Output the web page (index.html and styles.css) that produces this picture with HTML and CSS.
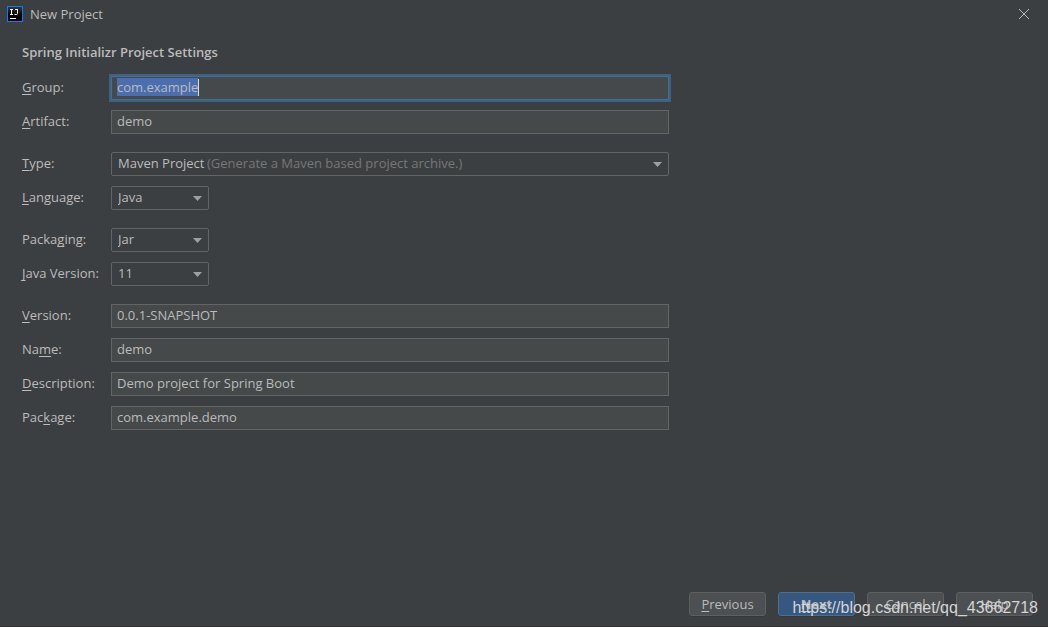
FILE: index.html
```html
<!DOCTYPE html>
<html lang="en">
<head>
<meta charset="utf-8">
<title>New Project</title>
<link rel="stylesheet" href="styles.css">
</head>
<body>
<div class="dialog">
  <header class="titlebar">
    <svg class="logo" width="16" height="16" viewBox="0 0 16 16" aria-hidden="true">
      <defs><linearGradient id="logo-fill" x1="0" y1="0" x2="0" y2="1"><stop offset="0" stop-color="#3a3a3a"/><stop offset="0.6" stop-color="#000"/></linearGradient></defs>
      <rect x="0.5" y="0.5" width="15" height="15" fill="url(#logo-fill)" stroke="#087cfa"/>
      <path d="M3 3.5h3M4.5 3v5M3 8.5h3M8 3.5h3M10.5 3v4.5q0 1-1 1H7.5M3 12.5h6" fill="none" stroke="#fff"/>
    </svg>
    <h1 class="title">New Project</h1>
    <button class="close" type="button" aria-label="Close">
      <svg width="10" height="10" viewBox="0 0 10 10" aria-hidden="true"><path d="M0 0L10 10M10 0L0 10" fill="none" stroke="currentColor"/></svg>
    </button>
  </header>
  <form class="settings" id="settings">
    <h2 class="heading">Spring Initializr Project Settings</h2>
    <div class="group">
      <label class="label" for="group"><u>G</u>roup:</label>
      <div class="field"><input class="text" id="group" type="text" value="com.example" autofocus><span class="caret"></span></div>
      <label class="label" for="artifact"><u>A</u>rtifact:</label>
      <input class="text" id="artifact" type="text" value="demo">
    </div>
    <div class="group">
      <label class="label" for="type"><u>T</u>ype:</label>
      <div class="field"><select class="select" id="type"><option>Maven Project</option></select><span class="hint">(Generate a Maven based project archive.)</span></div>
      <label class="label" for="language"><u>L</u>anguage:</label>
      <select class="select short" id="language"><option>Java</option></select>
    </div>
    <div class="group">
      <label class="label" for="packaging">Packa<u>g</u>ing:</label>
      <select class="select short" id="packaging"><option>Jar</option></select>
      <label class="label" for="java"><u>J</u>ava Version:</label>
      <select class="select short" id="java"><option>11</option></select>
    </div>
    <div class="group">
      <label class="label" for="version"><u>V</u>ersion:</label>
      <input class="text" id="version" type="text" value="0.0.1-SNAPSHOT">
      <label class="label" for="name">Na<u>m</u>e:</label>
      <input class="text" id="name" type="text" value="demo">
      <label class="label" for="description"><u>D</u>escription:</label>
      <input class="text" id="description" type="text" value="Demo project for Spring Boot">
      <label class="label" for="package">Pac<u>k</u>age:</label>
      <input class="text" id="package" type="text" value="com.example.demo">
    </div>
  </form>
  <footer class="actions">
    <button class="button" type="button"><u>P</u>revious</button>
    <button class="button primary" type="submit" form="settings"><u>N</u>ext</button>
    <button class="button" type="button">Cancel</button>
    <button class="button" type="button">Help</button>
    <span class="watermark">https://blog.csdn.net/qq_43662718</span>
  </footer>
</div>
<script src="main.js"></script>
</body>
</html>
```

FILE: styles.css
```css
* { box-sizing: border-box; }

body {
  margin: 0;
  background: #3c3f41;
  color: #bbbbbb;
  font: 13px/18px "Open Sans", "Noto Sans", sans-serif;
}

.dialog {
  display: flex;
  flex-direction: column;
  min-height: 100vh;
  border-bottom: 1px solid #303234;
}

.titlebar {
  display: flex;
  align-items: center;
  gap: 7px;
  height: 28px;
  padding: 0 19px 0 7px;
}

.logo { display: block; }

.title {
  margin: 0;
  font-size: 13px;
  font-weight: 400;
}

.close {
  display: flex;
  margin-left: auto;
  padding: 0;
  border: 0;
  background: none;
  color: #bbbbbb;
}

.settings {
  display: flex;
  flex-direction: column;
  gap: 18px;
  flex: 1;
  max-width: 691px;
  padding: 15px 22px;
}

.heading {
  margin: 0 0 -3px;
  font-size: 13px;
  line-height: 18px;
  font-weight: 600;
}

.group {
  display: grid;
  grid-template-columns: 79px 1fr;
  gap: 10px;
  align-items: center;
}

.label {
  padding-bottom: 2px;
  white-space: nowrap;
}

u {
  text-decoration: underline;
  text-decoration-thickness: 1px;
  text-underline-offset: 2px;
  text-decoration-skip-ink: none;
}

.field {
  position: relative;
  display: grid;
}

.text, .select {
  width: 100%;
  height: 24px;
  margin: 0;
  border: 1px solid #646464;
  color: #bbbbbb;
  font: inherit;
  outline: 0;
}

.text {
  padding: 0 5px 2px;
  background: #45494a;
}

.text:focus {
  border-color: #466d94;
  box-shadow: 0 0 0 2px #3d6185;
}

.text::selection {
  background: #4b6eaf;
  color: #bbbbbb;
}

.caret {
  position: absolute;
  top: 3px;
  left: 87px;
  width: 1px;
  height: 17px;
  background: #dddddd;
}

.select {
  appearance: none;
  padding: 0 24px 2px 6px;
  border-radius: 2px;
  background: #3c3f41 url("data:image/svg+xml,%3Csvg xmlns='http://www.w3.org/2000/svg' width='9' height='5'%3E%3Cpath d='M0 0H9L4.5 5Z' fill='%239da0a2'/%3E%3C/svg%3E") no-repeat right 6px center;
}

.short { width: 98px; }

.hint {
  position: absolute;
  top: 2px;
  left: 96px;
  color: #777777;
  pointer-events: none;
}

.actions {
  position: relative;
  display: flex;
  justify-content: flex-end;
  gap: 12px;
  padding: 0 15px 10px;
}

.button {
  width: 77px;
  height: 24px;
  padding: 0;
  border: 1px solid #5e6060;
  border-radius: 3px;
  background: #4c5052;
  color: #bbbbbb;
  font: inherit;
  box-shadow: 0 1px 0 #36393a;
}

.primary {
  border-color: #4c708c;
  background: #365880;
  font-weight: 700;
}

.watermark {
  position: absolute;
  right: 10px;
  bottom: 9px;
  color: #d4d4d4;
  font-family: "Liberation Sans", Arial, sans-serif;
  font-size: 16px;
  pointer-events: none;
}
```

FILE: main.js
```js
const groupInput = document.getElementById('group');
groupInput.focus();
groupInput.select();
```
